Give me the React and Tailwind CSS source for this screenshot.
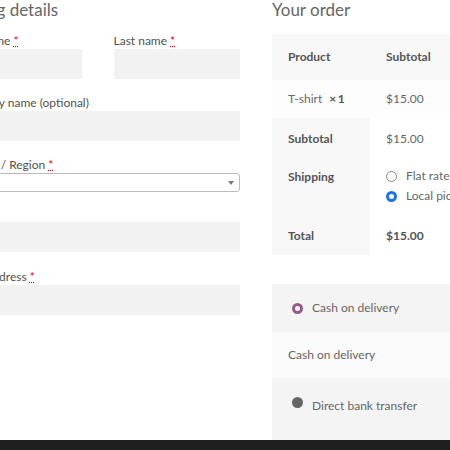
const font = { fontFamily: "Lato, 'Open Sans', sans-serif" };

function Label({ text, req }) {
  return (
    <label className="block text-[12px] text-[#515151] leading-4">
      {text}
      {req && <span className="text-red-600 ml-[3px] underline decoration-dotted">*</span>}
    </label>
  );
}

function Field({ text, req }) {
  return (
    <div>
      <Label text={text} req={req} />
      <div className="h-[30px] bg-[#f2f2f2]"></div>
    </div>
  );
}

export default function App() {
  return (
    <div className="w-[450px] h-[450px] overflow-hidden bg-white relative" style={font}>
      <div className="flex ml-[-45px]">
        <div className="w-[285px] shrink-0">
          <h3 className="text-[17px] text-[#666] leading-5 mb-[13px] pl-[5px]">Billing details</h3>
          <div className="grid grid-cols-2 gap-8">
            <Field text="First name" req />
            <Field text="Last name" req />
          </div>
          <div className="mt-[16px]"><Field text="Company name (optional)" /></div>
          <div className="mt-[16px]">
            <Label text="Country / Region" req />
            <div className="h-[19px] border border-[#bbb] rounded-[3px] flex items-center justify-end pr-[5px]">
              <span className="w-0 h-0 border-l-[3px] border-r-[3px] border-t-[4px] border-l-transparent border-r-transparent border-t-[#777]"></span>
            </div>
          </div>
          <div className="mt-[14px]"><Field text="Town" req /></div>
          <div className="mt-[17px]"><Field text="Email address" req /></div>
        </div>
        <div className="ml-8 w-[220px] shrink-0">
          <h3 className="text-[17px] text-[#666] leading-5 mb-[14px]">Your order</h3>
          <div className="text-[12px] text-[#666]">
            <div className="flex h-[46px] items-center bg-[#f8f8f8] font-bold text-[#555]">
              <div className="w-[98px] pl-4">Product</div>
              <div className="pl-4">Subtotal</div>
            </div>
            <div className="flex h-[38px] items-center bg-[#fdfdfd]">
              <div className="w-[98px] pl-4">T-shirt <b className="ml-1 text-[#555]">×&thinsp;1</b></div>
              <div className="pl-4">$15.00</div>
            </div>
            <div className="flex">
              <div className="w-[98px] bg-[#f8f8f8] pl-4 font-bold text-[#555]">
                <div className="pt-[12px] h-[44px]">Subtotal</div>
                <div className="h-[59px] pt-[6px]">Shipping</div>
                <div className="h-[34px] pt-[6px]">Total</div>
              </div>
              <div className="pl-4">
                <div className="pt-[12px] h-[44px]">$15.00</div>
                <div className="h-[59px] pt-[4px]">
                  <div className="flex items-center gap-[9px] h-[20px]">
                    <span className="w-[11px] h-[11px] rounded-full border border-[#888] bg-white"></span>Flat rate
                  </div>
                  <div className="flex items-center gap-[9px] h-[20px] whitespace-nowrap">
                    <span className="w-[11px] h-[11px] rounded-full border-[3px] border-[#1a73e8] bg-white"></span>Local pickup
                  </div>
                </div>
                <div className="h-[34px] pt-[6px] font-bold text-[#555]">$15.00</div>
              </div>
            </div>
          </div>
          <div className="mt-[29px] text-[12px] text-[#666]">
            <div className="h-[48px] bg-[#f4f4f4] flex items-center pl-5 gap-[9px]">
              <span className="w-[11px] h-[11px] rounded-full border-[3px] border-[#96588a] bg-white"></span>Cash on delivery
            </div>
            <div className="h-[46px] bg-[#fafafa] flex items-center pl-4">Cash on delivery</div>
            <div className="h-[62px] bg-[#f4f4f4] flex items-start pt-[19px] pl-5 gap-[9px]">
              <span className="w-[11px] h-[11px] rounded-full bg-[#666]"></span>Direct bank transfer
            </div>
          </div>
        </div>
      </div>
      <div className="absolute left-0 right-0 bottom-0 h-[10px] bg-[#1f1f1f]"></div>
    </div>
  );
}
